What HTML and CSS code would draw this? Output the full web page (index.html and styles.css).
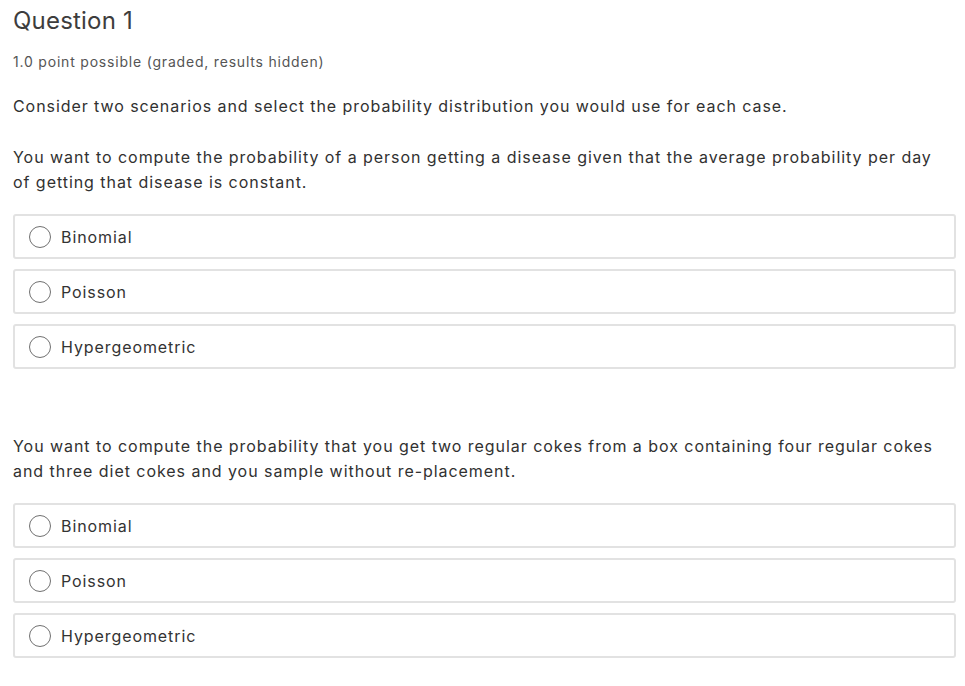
FILE: index.html
```html
<!DOCTYPE html>
<html>
<head>
<meta charset="utf-8">
<link rel="stylesheet" href="styles.css">
</head>
<body>
<div class="problem">
  <h3 class="title">Question 1</h3>
  <div class="meta">1.0 point possible (graded, results hidden)</div>
  <p class="intro">Consider two scenarios and select the probability distribution you would use for each case.</p>

  <p class="prompt">You want to compute the probability of a person getting a disease given that the average probability per day of getting that disease is constant.</p>
  <div class="choices">
    <label class="choice"><span class="radio"></span><span>Binomial</span></label>
    <label class="choice"><span class="radio"></span><span>Poisson</span></label>
    <label class="choice"><span class="radio"></span><span>Hypergeometric</span></label>
  </div>

  <p class="prompt second">You want to compute the probability that you get two regular cokes from a box containing four regular cokes and three diet cokes and you sample without re-placement.</p>
  <div class="choices">
    <label class="choice"><span class="radio"></span><span>Binomial</span></label>
    <label class="choice"><span class="radio"></span><span>Poisson</span></label>
    <label class="choice"><span class="radio"></span><span>Hypergeometric</span></label>
  </div>
</div>
</body>
</html>
```
FILE: styles.css
```css
html, body {
  margin: 0;
  padding: 0;
  background: #fff;
}
body {
  font-family: Inter, "Noto Sans", sans-serif;
  color: #313131;
}
.problem {
  padding: 6px 9px 0 13px;
}
.title {
  margin: 0;
  font-size: 24px;
  font-weight: 400;
  line-height: 30px;
  letter-spacing: 0.2px;
  color: #3d3d3d;
}
.meta {
  margin-top: 16px;
  font-size: 14px;
  line-height: 20px;
  letter-spacing: 0.8px;
  color: #555;
}
.intro {
  margin: 22px 0 0;
  font-size: 16px;
  line-height: 25px;
  letter-spacing: 0.93px;
}
.prompt {
  margin: 26px 0 0;
  max-width: 936px;
  font-size: 16px;
  line-height: 25px;
  letter-spacing: 0.95px;
}
.prompt.second {
  margin-top: 65px;
}
.choices {
  margin-top: 19px;
  display: flex;
  flex-direction: column;
  gap: 10px;
}
.choice {
  display: flex;
  align-items: center;
  gap: 10px;
  height: 45px;
  box-sizing: border-box;
  padding: 0 14px;
  border: 2px solid #e2e2e2;
  border-radius: 3px;
  font-size: 16px;
  letter-spacing: 0.92px;
  color: #333;
}
.radio {
  width: 22px;
  height: 22px;
  box-sizing: border-box;
  border: 1px solid #707070;
  border-radius: 50%;
  flex: none;
}
```
